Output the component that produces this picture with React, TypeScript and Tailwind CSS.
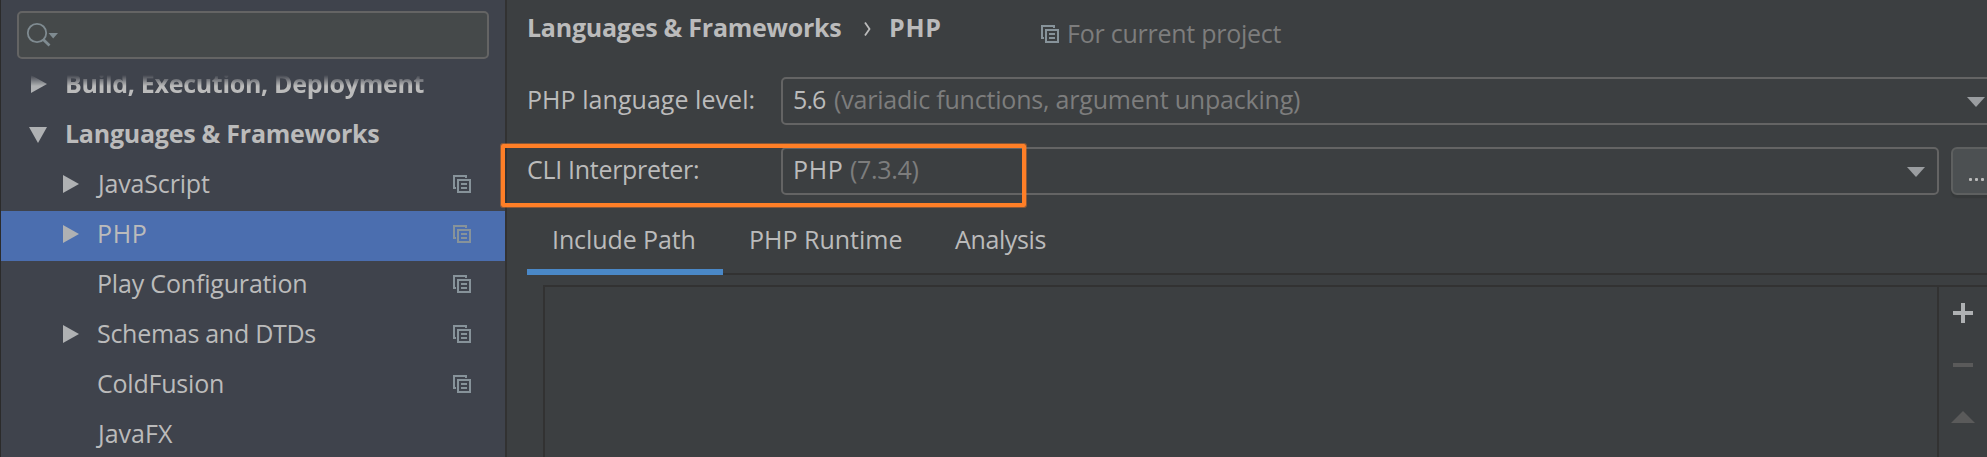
import type { ReactNode } from "react";

function CopyIcon({ className = "" }: { className?: string }) {
  return (
    <svg width="18" height="18" viewBox="0 0 18 18" className={`shrink-0 ${className}`} fill="currentColor" shapeRendering="crispEdges">
      <path d="M0 0h14v3h-2v-1h-10v10h1v2h-3z" />
      <path fillRule="evenodd" d="M4 4h14v14h-14zM6 6v10h10v-10z" />
      <path d="M8 8h6v2h-6zM8 12h6v2h-6z" />
    </svg>
  );
}

function Arrow({ open = false }: { open?: boolean }) {
  return open ? (
    <svg width="18" height="16" viewBox="0 0 18 16" className="mt-4" fill="#afb1b3">
      <path d="M0 0h18l-9 16z" />
    </svg>
  ) : (
    <svg width="16" height="18" viewBox="0 0 16 18" className="mt-3.5" fill="#afb1b3">
      <path d="M0 0l16 9l-16 9z" />
    </svg>
  );
}

function GroupRow({ label, open, className }: { label: string; open?: boolean; className: string }) {
  return (
    <div className="flex h-[50px] shrink-0 items-start">
      <div className={open ? "ml-7 w-9" : "ml-[30px] w-[34px]"}>
        <Arrow open={open} />
      </div>
      <span className={`font-bold ${className}`}>{label}</span>
    </div>
  );
}

type Item = { label: string; expandable?: boolean; copy?: boolean; selected?: boolean; className: string };

const items: Item[] = [
  { label: "JavaScript", expandable: true, copy: true, className: "tracking-[-0.17px] ml-[1px]" },
  { label: "PHP", expandable: true, copy: true, selected: true, className: "tracking-[0.7px]" },
  { label: "Play Configuration", copy: true, className: "tracking-[-0.18px]" },
  { label: "Schemas and DTDs", expandable: true, copy: true, className: "tracking-[-0.28px]" },
  { label: "ColdFusion", copy: true, className: "tracking-[-0.21px]" },
  { label: "JavaFX", className: "ml-[1px]" },
];

function ItemRow({ item }: { item: Item }) {
  return (
    <div className={`flex h-[50px] shrink-0 items-start ${item.selected ? "bg-[#4b6eaf]" : ""}`}>
      <div className="ml-[62px] w-[34px]">{item.expandable && <Arrow />}</div>
      <span className={`leading-[44px] ${item.className}`}>{item.label}</span>
      {item.copy && <CopyIcon className="ml-auto mr-[34px] mt-3.5 text-[#87939a]" />}
    </div>
  );
}

function DownArrow({ className }: { className: string }) {
  return (
    <svg width="18" height="10" viewBox="0 0 18 10" className={`ml-auto mt-[18px] shrink-0 ${className}`} fill="#9a9da0">
      <path d="M0 0h18l-9 10z" />
    </svg>
  );
}

function Select({ children, className }: { children: ReactNode; className: string }) {
  return (
    <div className={`flex h-12 shrink-0 items-start rounded-[5px] border-2 border-[#646464] pl-[10px] leading-10 ${className}`}>
      {children}
    </div>
  );
}

export default function App() {
  return (
    <div className="relative flex h-[457px] w-[1987px] overflow-hidden whitespace-pre bg-[#3c3f41] font-['Open_Sans','Noto_Sans',sans-serif] text-[25px] text-[#bbbbbb]">
      <aside className="flex w-[507px] shrink-0 flex-col border-l border-r-2 border-l-[#2b2b2b] border-r-[#323232] bg-[#3f434c]">
        <div className="ml-4 mt-[11px] flex h-12 w-[472px] shrink-0 items-start rounded-[5px] border-2 border-[#646464] bg-[#45494a]">
          <svg width="34" height="26" viewBox="0 0 34 26" className="ml-[7px] mt-[9px]" fill="none" stroke="#7f8b91">
            <circle cx="11" cy="11" r="9.2" strokeWidth="1.8" />
            <path d="M17 17.3l6.5 6.2" strokeWidth="2.8" />
            <path d="M22.5 11h9.5l-4.8 5.5z" fill="#7f8b91" stroke="none" />
          </svg>
        </div>
        <div className="mt-0.5 flex flex-col">
          <div className="[mask-image:linear-gradient(to_bottom,transparent_14px,black_25px)]">
            <GroupRow label="Build, Execution, Deployment" className="leading-[45px] tracking-[-0.3px]" />
          </div>
          <GroupRow label="Languages & Frameworks" open className="leading-[44px] tracking-[-0.25px]" />
          {items.map((item) => (
            <ItemRow key={item.label} item={item} />
          ))}
        </div>
      </aside>

      <main className="flex min-w-0 flex-1 flex-col">
        <header className="flex h-[77px] shrink-0 items-start pl-[20px]">
          <span className="w-[337px] font-bold leading-[54px] tracking-[-0.25px]">Languages & Frameworks</span>
          <svg width="8" height="14" viewBox="0 0 8 14" className="mt-[22px]" fill="none" stroke="#bbbbbb" strokeWidth="1.8">
            <path d="M1 0.5l4.5 6.5l-4.5 6.5" />
          </svg>
          <span className="ml-[17px] w-[152px] font-bold leading-[54px] tracking-[0.7px]">PHP</span>
          <CopyIcon className="mt-[25px] text-[#87939a]" />
          <span className="ml-[8px] leading-[66px] tracking-[-0.25px] text-[#7d7d7d]">For current project</span>
        </header>

        <div className="flex h-12 shrink-0 items-start pl-[20px]">
          <label className="w-[254px] shrink-0 leading-[44px] tracking-[0.05px]">PHP language level:</label>
          <Select className="w-[1218px]">
            <span className="w-[41px] tracking-[-0.9px]">5.6</span>
            <span className="tracking-[-0.2px] text-[#7d7d7d]">(variadic functions, argument unpacking)</span>
            <DownArrow className="mr-3" />
          </Select>
        </div>

        <div className="mt-[22px] flex h-12 shrink-0 items-start pl-[20px]">
          <label className="w-[254px] shrink-0 leading-[44px] tracking-[-0.3px]">CLI Interpreter:</label>
          <Select className="w-[1158px]">
            <span className="w-[57px] tracking-[0.7px]">PHP</span>
            <span className="tracking-[-0.32px] text-[#7d7d7d]">(7.3.4)</span>
            <DownArrow className="mr-3" />
          </Select>
          <button className="ml-3 flex h-12 w-[60px] shrink-0 items-start gap-[3px] rounded-[6px] border-2 border-[#5e6060] bg-[#4c5052] pl-[16px] pt-[29px] shadow-[0_3px_1px_#36393a]">
            <i className="size-[3px] rounded-[1px] bg-[#bbbbbb]" />
            <i className="size-[3px] rounded-[1px] bg-[#bbbbbb]" />
            <i className="size-[3px] rounded-[1px] bg-[#bbbbbb]" />
          </button>
        </div>

        <nav className="ml-5 flex h-20 shrink-0 items-end bg-[linear-gradient(#323232,#323232)] bg-[length:100%_2px] bg-bottom bg-no-repeat">
          <div className="flex h-[70px] w-[196px] border-b-[6px] border-[#4a88c7] pl-[25px] leading-[68px] tracking-[-0.1px]">Include Path</div>
          <div className="ml-[26px] h-[70px] w-[206px] leading-[68px]">PHP Runtime</div>
          <div className="h-[70px] leading-[68px] tracking-[-0.37px]">Analysis</div>
        </nav>

        <section className="ml-9 mt-2.5 flex flex-1 border-l-2 border-t-2 border-[#323232]">
          <div className="w-[1392px] shrink-0" />
          <div className="flex flex-1 flex-col items-center border-l-2 border-[#323232]">
            <svg width="24" height="120" viewBox="0 0 24 120" className="mt-4">
              <path d="M10 0h4v8h8v4h-8v8h-4v-8h-8v-4h8z" fill="#afb1b3" />
              <path d="M2 60h20v4h-20z" fill="#5a5a5a" />
              <path d="M12 108l12 12h-24z" fill="#5a5a5a" />
            </svg>
          </div>
        </section>
      </main>

      <div className="absolute left-[501px] top-[144px] h-[63px] w-[525px] rounded-[2px] border-4 border-[#ff7f27] shadow-[0_0_0_1px_#ff7f2766]" />
    </div>
  );
}
